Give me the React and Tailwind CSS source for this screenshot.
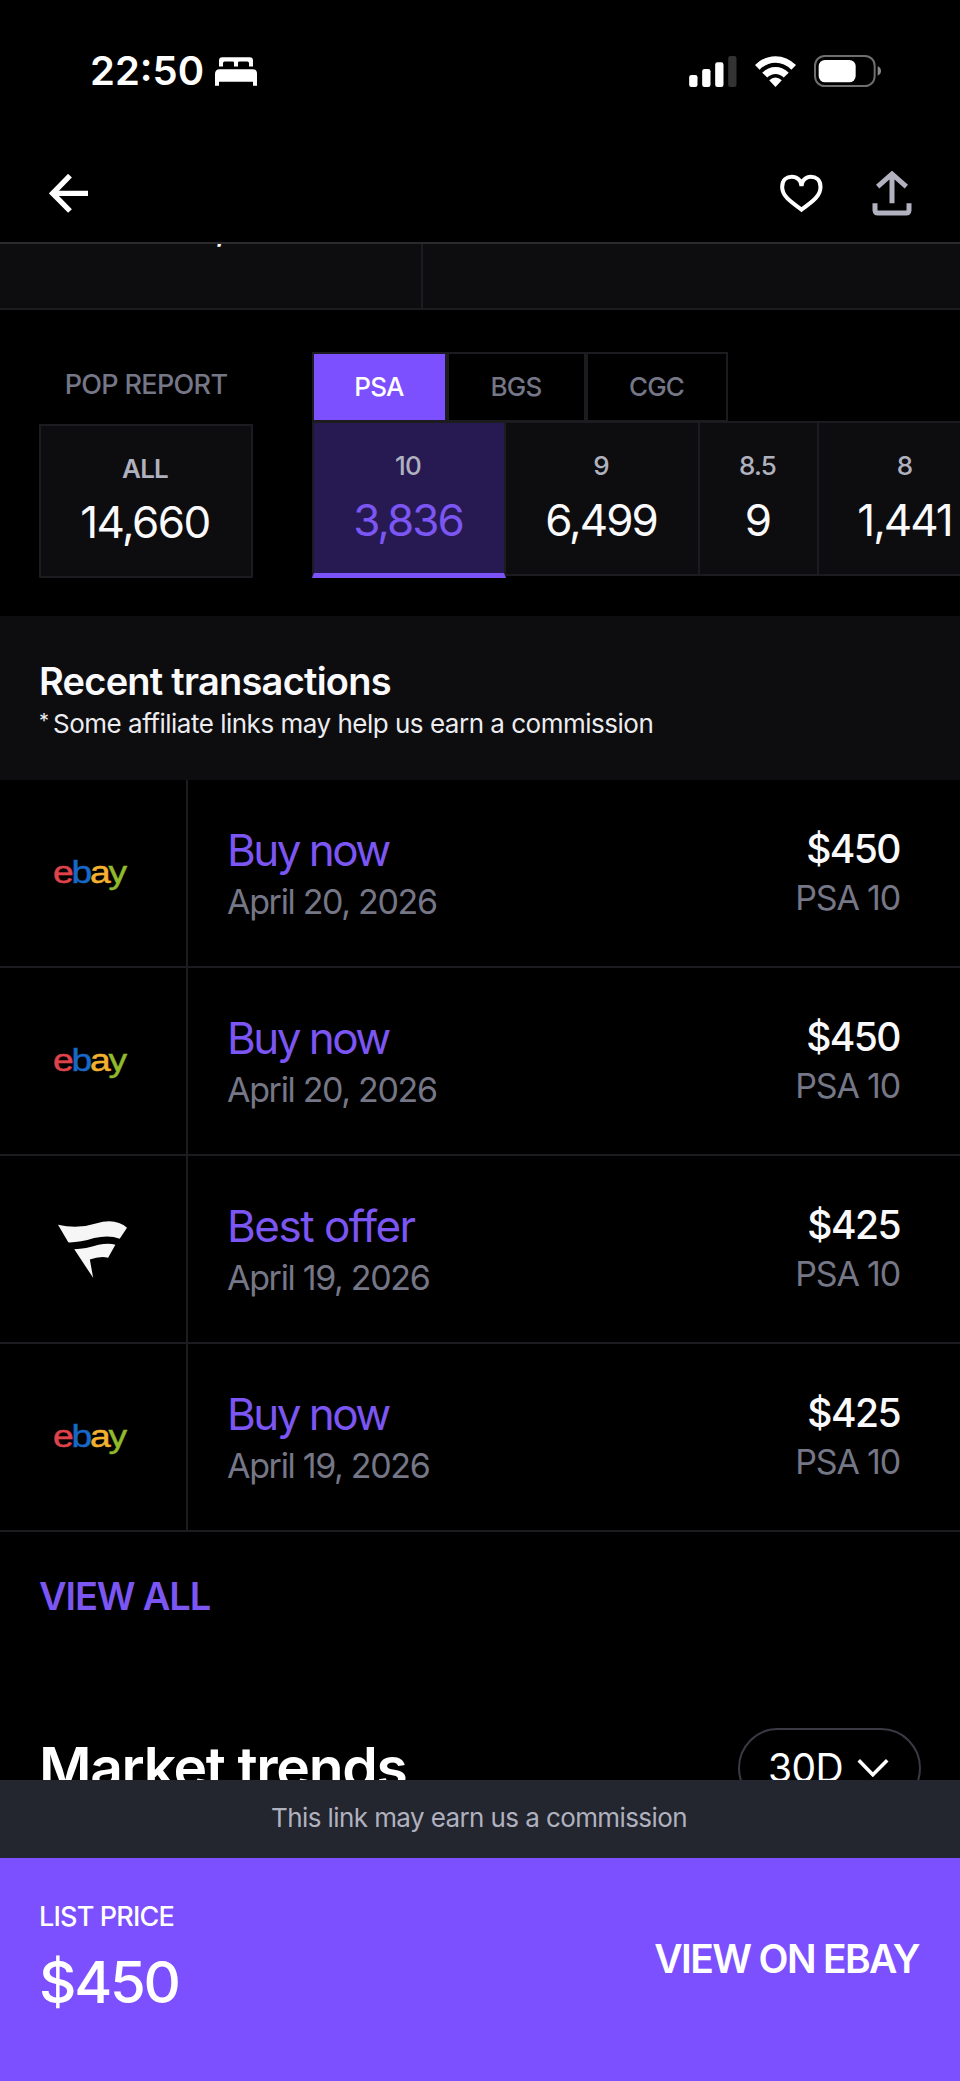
import React, { useState } from 'react';

const grades = {
  PSA: [
    { grade: '10', count: '3,836', width: 'w-[194px]' },
    { grade: '9', count: '6,499', width: 'w-[194px]' },
    { grade: '8.5', count: '9', width: 'w-[119px]' },
    { grade: '8', count: '1,441', width: 'w-[175px]' },
  ],
};

const companies = [
  { name: 'PSA', width: 'w-[135px]' },
  { name: 'BGS', width: 'w-[139px]' },
  { name: 'CGC', width: 'w-[142px]' },
];

const transactions = [
  { id: 1, source: 'ebay', type: 'Buy now', date: 'April 20, 2026', price: '$450', grade: 'PSA 10' },
  { id: 2, source: 'ebay', type: 'Buy now', date: 'April 20, 2026', price: '$450', grade: 'PSA 10' },
  { id: 3, source: 'fanatics', type: 'Best offer', date: 'April 19, 2026', price: '$425', grade: 'PSA 10' },
  { id: 4, source: 'ebay', type: 'Buy now', date: 'April 19, 2026', price: '$425', grade: 'PSA 10' },
];

const StatusBar = () => (
  <div className="flex h-[142px] shrink-0 items-center pl-[90px] pr-[79px]">
    <span className="text-[40px] font-semibold leading-[48px]">22:50</span>
    <svg className="ml-[11px] h-[29px] w-[42px]" viewBox="645 84 126 86" fill="white">
      <path d="M657 112V94q0-10 10-10h82q10 0 10 10v18h-12v-10q0-5-5-5h-24q-4 0-4 4v11h-12v-11q0-4-4-4h-24q-5 0-5 5v10z" />
      <path d="M645 170v-36q0-14 14-14h98q14 0 14 14v36h-12v-12H657v12z" />
    </svg>
    <div className="ml-auto flex items-center">
      <svg className="h-[31px] w-[48px]" viewBox="626 78 143 93" fill="white">
        <rect x="626" y="135" width="25" height="36" rx="7" />
        <rect x="665" y="117" width="25" height="54" rx="7" />
        <rect x="704" y="97" width="25" height="74" rx="7" />
        <rect x="743" y="78" width="25" height="93" rx="7" fill="#333333" />
      </svg>
      <svg className="ml-[18px] h-[31px] w-[41px]" viewBox="822 77 124 93" fill="white">
        <path d="M822 104Q849 77 884 77T946 104L932 118Q911 97 884 97T836 118Z" />
        <path d="M844 127Q861 110 884 110T924 127L909 142Q898 131 884 131T859 142Z" />
        <path d="M865 150Q874 142 884 142T903 150L884 170Z" />
      </svg>
      <svg className="ml-[18px] h-[32px] w-[67px]" viewBox="1000 75 201 96">
        <rect x="1003" y="78" width="179" height="90" rx="29" fill="none" stroke="#6e6e6e" strokeWidth="6" />
        <rect x="1014" y="90" width="111" height="67" rx="19" fill="white" />
        <path d="M1191 109q10 4 10 14t-10 14z" fill="#8a8a8a" />
      </svg>
    </div>
  </div>
);

const NavBar = () => (
  <div className="flex h-[102px] shrink-0 items-center border-b-2 border-[#29292e] pl-[49px] pr-[48px] pt-[2px]">
    <svg className="h-[39px] w-[39px]" viewBox="147 431 117 117" fill="none" stroke="white" strokeWidth="16">
      <path d="M264 489H158M210 436L158 489L210 542" />
    </svg>
    <svg className="ml-auto h-[39px] w-[43px]" viewBox="900 431 128 117" fill="none" stroke="white" strokeWidth="12">
      <path d="M964 538C925 510 906 495 906 470C906 447 921 439 935 439C950 439 964 450 964 468C964 450 978 439 992 439C1006 439 1021 447 1021 470C1021 495 1003 510 964 538Z" />
    </svg>
    <svg className="ml-[49px] h-[45px] w-[40px]" viewBox="1175 421 120 135" fill="none" stroke="#b1b1bf" strokeWidth="15">
      <path d="M1235 518V432M1192 468L1235 430L1278 468" />
      <path d="M1184 518v20q0 9 9 9h84q9 0 9-9v-20" />
    </svg>
  </div>
);

const EbayLogo = () => (
  <span className="mr-[8px] inline-block scale-x-[1.2] font-['Liberation_Sans',sans-serif] text-[31px] leading-[30px] tracking-[-0.06em] [-webkit-text-stroke:0.5px]">
    <span className="text-[#e0434b]">e</span>
    <span className="text-[#1768c9]">b</span>
    <span className="text-[#f3b130]">a</span>
    <span className="text-[#8fbb2c]">y</span>
  </span>
);

const FanaticsLogo = () => (
  <svg className="mr-px h-[57px] w-[69px]" viewBox="176 215 208 171" fill="#f6f6f6">
    <path d="M176 226Q235 240 290 222Q350 204 384 235L362 268Q330 256 285 266Q240 280 207 279Z" />
    <path d="M225 300Q260 298 298 286Q330 280 349 286L327 325Q300 320 272 331L282 386Z" />
  </svg>
);

const PopReport = () => {
  const [company, setCompany] = useState('PSA');
  const [selected, setSelected] = useState('10');

  return (
    <div className="flex h-[306px] shrink-0 pl-[39px] pt-[42px]">
      <div className="w-[214px] shrink-0 text-center">
        <div className="h-[72px] text-[27px] font-medium leading-[65px] tracking-[-0.025em] text-[#757787]">POP REPORT</div>
        <div className="h-[154px] border-2 border-[#1c1c20] bg-[#0d0d0f] pr-[2px] pt-[30px]">
          <div className="text-[26px] font-semibold leading-[26px] tracking-[-0.03em] text-[#b0b1bf]">ALL</div>
          <div className="mt-[14px] text-[44px] leading-[52px] tracking-[-0.035em] text-[#fafafc]">14,660</div>
        </div>
      </div>
      <div className="ml-[59px] min-w-0 flex-1 overflow-hidden">
        <div className="flex">
          {companies.map((c) => (
            <button
              key={c.name}
              onClick={() => setCompany(c.name)}
              className={`${c.width} h-[70px] shrink-0 border-2 border-[#1c1c20] pb-[2px] pr-px text-[26px] font-medium tracking-[-0.03em] ${
                company === c.name ? 'bg-[#7c4fff] text-white' : 'text-[#757787]'
              }`}
            >
              {c.name}
            </button>
          ))}
        </div>
        <div className="-mt-px flex items-start">
          {grades.PSA.map((g) => (
            <div
              key={g.grade}
              onClick={() => setSelected(g.grade)}
              className={`${g.width} shrink-0 border-r-2 border-t-2 border-[#1c1c20] pr-[2px] pt-[30px] text-center first:border-l-2 ${
                selected === g.grade
                  ? 'h-[157px] border-b-[5px] border-b-[#7c53f8] bg-[#271a52]'
                  : 'h-[155px] border-b-2 bg-[#0d0d0f]'
              }`}
            >
              <div className="text-[26px] font-medium leading-[26px] tracking-[-0.03em] text-[#b0b1bf]">{g.grade}</div>
              <div
                className={`mt-[15px] text-[44px] leading-[52px] tracking-[-0.045em] ${
                  selected === g.grade ? 'text-[#7c56f3]' : 'text-[#fafafc]'
                }`}
              >
                {g.count}
              </div>
            </div>
          ))}
        </div>
      </div>
    </div>
  );
};

const TransactionRow = ({ item }) => (
  <div className="flex h-[188px] shrink-0 border-b-2 border-[#1c1c20]">
    <div className="flex w-[188px] items-center justify-center border-r-2 border-[#1c1c20]">
      {item.source === 'ebay' ? <EbayLogo /> : <FanaticsLogo />}
    </div>
    <div className="flex flex-1 justify-between pl-[39px] pr-[60px]">
      <div className="pt-[44px]">
        <div
          className={`text-[44px] leading-[52px] text-[#7c56f3] ${
            item.type === 'Buy now' ? 'tracking-[-0.058em]' : 'tracking-[-0.034em]'
          }`}
        >
          {item.type}
        </div>
        <div className="mt-[6px] text-[34px] leading-[40px] tracking-[-0.039em] text-[#757787]">{item.date}</div>
      </div>
      <div className="pt-[43px] text-right">
        <div className="text-[39px] font-medium leading-[52px] tracking-[-0.04em] text-[#fafafc]">{item.price}</div>
        <div className="mt-[3px] text-[34px] leading-[40px] tracking-[-0.035em] text-[#757787]">{item.grade}</div>
      </div>
    </div>
  </div>
);

const App = () => {
  return (
    <div className="flex h-[2081px] w-[960px] flex-col overflow-hidden bg-black font-['Inter',sans-serif] text-white">
      <StatusBar />
      <NavBar />
      <div className="flex min-h-0 flex-1 flex-col overflow-hidden">
        <div className="flex h-[66px] shrink-0 overflow-hidden border-b-2 border-[#1c1c20] bg-[#0d0d0f]">
          <div className="w-[423px] border-r-2 border-[#1c1c20] pl-[215px]">
            <div className="-mt-[42px] text-[38px] font-medium leading-[48px]">,</div>
          </div>
        </div>

        <PopReport />

        <div className="h-[164px] shrink-0 bg-[#0d0d0f] pl-[39px] pt-[45px]">
          <h2 className="text-[38px] font-semibold leading-[40px] tracking-[-0.02em] text-[#fafafc]">Recent transactions</h2>
          <p className="mt-[10px] flex text-[26px] leading-[26px] tracking-[-0.019em] text-[#ececf0]">
            <span className="w-[14px] text-[20px] leading-[20px]">*</span>
            <span>Some affiliate links may help us earn a commission</span>
          </p>
        </div>

        {transactions.map((item) => (
          <TransactionRow key={item.id} item={item} />
        ))}

        <a className="shrink-0 pl-[39px] pt-[44px] text-[38px] font-semibold leading-[40px] tracking-[-0.03em] text-[#7c56f3]">VIEW ALL</a>

        <div className="mt-[112px] flex h-[80px] shrink-0 items-center justify-between pl-[39px] pr-[39px]">
          <h2 className="text-[57px] font-semibold leading-[60px] tracking-[-0.024em]">Market trends</h2>
          <button className="flex h-[80px] w-[183px] items-center rounded-full border-2 border-[#3a3a44] pb-px pl-[28px]">
            <span className="text-[39px] leading-[40px] tracking-[-0.015em]">30D</span>
            <svg className="ml-[14px] h-[18px] w-[32px]" viewBox="1130 689 95 55" fill="none" stroke="white" strokeWidth="11">
              <path d="M1134 693L1177 737L1221 693" />
            </svg>
          </button>
        </div>
      </div>

      <div className="h-[78px] shrink-0 bg-[#23252f] pr-[2px] text-center text-[26px] leading-[76px] tracking-[-0.023em] text-[#b0b1bf]">
        This link may earn us a commission
      </div>
      <div className="flex h-[223px] shrink-0 justify-between bg-[#7c4fff] pl-[39px] pr-[41px]">
        <div className="pt-[46px]">
          <div className="text-[27px] font-medium leading-[26px] tracking-[-0.03em]">LIST PRICE</div>
          <div className="mt-[22px] text-[58px] font-medium leading-[60px] tracking-[-0.04em]">$450</div>
        </div>
        <div className="pt-[81px] text-[39px] font-semibold leading-[40px] tracking-[-0.042em]">VIEW ON EBAY</div>
      </div>
    </div>
  );
};

export default App;
